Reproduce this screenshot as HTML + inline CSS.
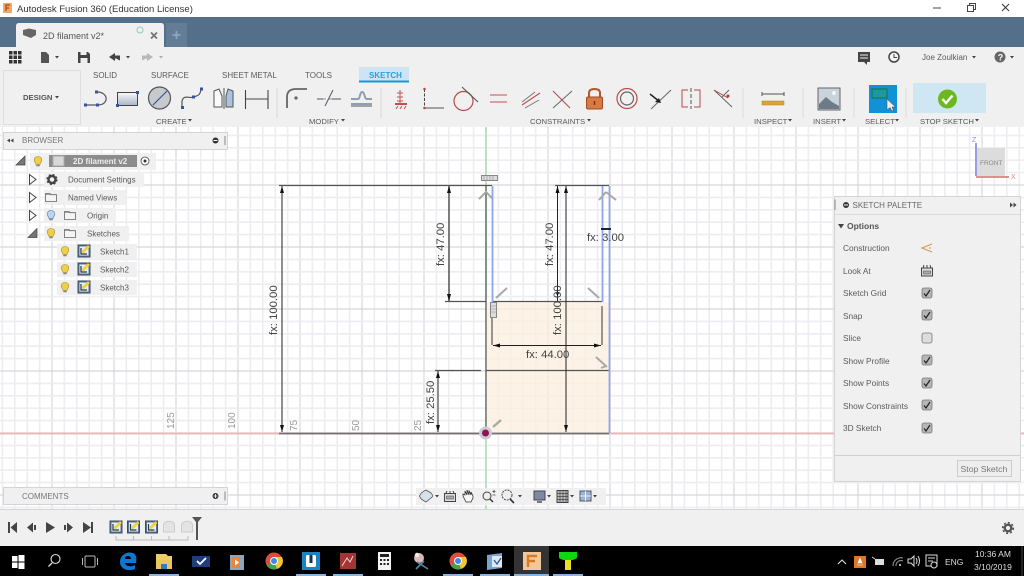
<!DOCTYPE html>
<html><head><meta charset="utf-8"><style>
html,body{margin:0;padding:0;width:1024px;height:576px;overflow:hidden;background:#fff}
svg{display:block;font-family:"Liberation Sans",sans-serif;filter:blur(.3px)}
text{fill:#5a5a5a;font-size:8.5px}
</style></head><body>
<svg width="1024" height="576" viewBox="0 0 1024 576" xmlns="http://www.w3.org/2000/svg">
<defs>
<g id="gv"><path d="M12.4 127V510M24.8 127V510M37.2 127V510M49.6 127V510" stroke="#edeef1" stroke-width="1.600" fill="none"/><path d="M0 127V510" stroke="#d6d8dc" stroke-width="1.200"/></g>
<g id="gh"><path d="M0 12.4H1024M0 24.8H1024M0 37.2H1024M0 49.6H1024" stroke="#edeef1" stroke-width="1.600" fill="none"/><path d="M0 0H1024" stroke="#d6d8dc" stroke-width="1.200"/></g>
<g id="bulb"><path d="M-2.500 2C-5 -1-3.500-4.500 0-4.500S5-1 2.500 2L2 3.500H-2Z" fill="#f1cf45" stroke="#a08f3d" stroke-width=".6"/><rect x="-1.700" y="3.500" width="3.400" height="1.800" fill="#888"/></g>
<g id="folder"><path d="M-5.500-4H-1L0-2.800H5.500V4H-5.500Z" fill="#f4f4f4" stroke="#666" stroke-width=".8"/><path d="M-5.500-2.800H0" stroke="#666" stroke-width=".6"/></g>
<g id="sk"><rect x="-6" y="-6" width="12" height="12" fill="#5b7492" stroke="#3d4c60"/><rect x="-4.500" y="-4.500" width="9" height="9" fill="#e8eef5"/><path d="M-3-3V3H3" stroke="#26364a" stroke-width="1.200" fill="none"/><path d="M-1.500 1.500L5-5" stroke="#f0d23a" stroke-width="2.800"/></g>
<g id="cb"><rect x="-5" y="-5" width="10" height="10" rx="2" fill="#b6b6b6" stroke="#777" stroke-width=".8"/><path d="M-3 .5L-1 3L3-3" stroke="#222" stroke-width="1.200" fill="none"/></g>
<g id="rowtri"><path d="M-3.500-5L3 0L-3.500 5Z" fill="#fff" stroke="#444" stroke-width="1"/></g>
<g id="opentri"><path d="M4-5V4H-5Z" fill="#777" stroke="#444" stroke-width=".7"/></g>
<g id="dn"><path d="M-2-1H2L0 1.500Z" fill="#444"/></g>
<g id="chrome"><circle r="8.500" fill="#dd4c3c"/><path d="M0 0L-7.400 4.200A8.500 8.500 0 0 0 3 8Z" fill="#46a14e"/><path d="M0-4H8A8.500 8.500 0 0 1 3 8L0 0Z" fill="#f3c530"/><circle r="4" fill="#fff"/><circle r="3" fill="#4585ee"/></g>
<linearGradient id="bg1" x1="0" y1="0" x2="0" y2="1"><stop offset="0" stop-color="#fafafa"/><stop offset="1" stop-color="#a8b4c8"/></linearGradient>
</defs>

<!-- title bar -->
<rect width="1024" height="17" fill="#fff"/>
<rect x="3" y="3" width="9" height="10" fill="#f1a868"/><path d="M6 11V5H10M6 8H9" stroke="#b8581a" stroke-width="1.500" fill="none"/>
<text x="17" y="12" style="font-size:9.500px;fill:#333">Autodesk Fusion 360 (Education License)</text>
<path d="M933 8H941" stroke="#444"/><path d="M967.500 5.500H973.500V11.500H967.500ZM969.500 5.500V3.500H975.500V9.500H973.500" fill="none" stroke="#444"/><path d="M1002 4L1009 11M1009 4L1002 11" stroke="#333"/>

<!-- tab band -->
<rect y="17" width="1024" height="30" fill="#546f8a"/>
<path d="M16 47V26Q16 23 19 23H161Q164 23 164 26V47Z" fill="#f0f0f0"/>
<rect x="166" y="23" width="21" height="24" fill="#637d96"/>
<path d="M176.500 31V39M172.500 35H180.500" stroke="#8fa4b8" stroke-width="1.800"/>
<path d="M23 30L29 28.500L36 30V35L31 38L23 35Z" fill="#666"/>
<text x="43" y="39" style="font-size:9px;fill:#555">2D filament v2*</text>
<circle cx="140" cy="30" r="3" fill="none" stroke="#8fc9c9"/>
<path d="M151 32.500L157 38.500M157 32.500L151 38.500" stroke="#777" stroke-width="1.800"/>

<!-- canvas -->
<rect y="127" width="1024" height="383" fill="#fff"/>
<use href="#gv" x="-10"/><use href="#gv" x="52"/><use href="#gv" x="114"/><use href="#gv" x="176"/><use href="#gv" x="238"/><use href="#gv" x="300"/><use href="#gv" x="362"/><use href="#gv" x="424"/><use href="#gv" x="486"/><use href="#gv" x="548"/><use href="#gv" x="610"/><use href="#gv" x="672"/><use href="#gv" x="734"/><use href="#gv" x="796"/><use href="#gv" x="858"/><use href="#gv" x="920"/><use href="#gv" x="982"/>
<path d="M0 135.400H1024M0 147.800H1024M0 160.200H1024M0 172.600H1024" stroke="#edeef1" stroke-width="1.600" fill="none"/>
<use href="#gh" y="185"/><use href="#gh" y="247"/><use href="#gh" y="309"/><use href="#gh" y="371"/><use href="#gh" y="433"/>
<path d="M0 495H1024" stroke="#d6d8dc" stroke-width="1.200"/><path d="M0 507.400H1024" stroke="#edeef1" stroke-width="1.600"/>
<path d="M0 433.500H1024" stroke="#e9b8b8" stroke-width="2"/><path d="M486 127V510" stroke="#a6d8a6" stroke-width="1.400"/>

<!-- toolbar -->
<rect y="47" width="1024" height="80" fill="#f0f0f0"/>
<g fill="#333"><rect x="9" y="51" width="3.500" height="3.500"/><rect x="13.500" y="51" width="3.500" height="3.500"/><rect x="18" y="51" width="3.500" height="3.500"/><rect x="9" y="55.500" width="3.500" height="3.500"/><rect x="13.500" y="55.500" width="3.500" height="3.500"/><rect x="18" y="55.500" width="3.500" height="3.500"/><rect x="9" y="60" width="3.500" height="3.500"/><rect x="13.500" y="60" width="3.500" height="3.500"/><rect x="18" y="60" width="3.500" height="3.500"/></g>
<path d="M41 52H46L49 55V63H41Z" fill="#555"/><use href="#dn" x="57" y="57"/>
<path d="M78 52H88L90 54V63H78Z" fill="#444"/><rect x="80.500" y="52" width="6" height="3" fill="#eee"/><rect x="80.500" y="58" width="7" height="5" fill="#eee"/>
<path d="M109 57L115 53V55.500H120V60.500L116 58.500H115V61Z" fill="#444"/><use href="#dn" x="128" y="57"/>
<path d="M153 57L147 53V55.500H142V60.500L146 58.500H147V61Z" fill="#b8b8b8"/><use href="#dn" x="161" y="57" opacity=".4"/>
<path d="M858 52H870V62H867V65L864 62H858Z" fill="#444"/><path d="M860 55H868M860 58H868" stroke="#eee"/>
<circle cx="894" cy="57" r="5" fill="#f5f5f5" stroke="#444" stroke-width="1.500"/><path d="M894 54V57.500H897" stroke="#444" fill="none"/>
<text x="922" y="60" style="font-size:8px">Joe Zoulkian</text><use href="#dn" x="974" y="57"/>
<circle cx="1000" cy="57" r="5.500" fill="#666"/><text x="997.700" y="60.500" style="font-size:9px;font-weight:bold;fill:#fff">?</text><use href="#dn" x="1012" y="57"/>

<rect x="3.500" y="70.500" width="77" height="54" fill="#f0f0f0" stroke="#dedede"/>
<text x="23" y="100" style="font-size:7.700px;font-weight:bold;fill:#555">DESIGN</text><use href="#dn" x="57" y="97"/>
<text x="93" y="78" style="font-size:8px">SOLID</text><text x="151" y="78" style="font-size:8px">SURFACE</text><text x="222" y="78" style="font-size:8px">SHEET METAL</text><text x="305" y="78" style="font-size:8px">TOOLS</text>
<rect x="359" y="67" width="50" height="15" fill="#cfe4f2"/><rect x="359" y="80.500" width="50" height="2" fill="#1d96d2"/>
<text x="369" y="78" style="font-size:8px;font-weight:bold;fill:#2a9ed8">SKETCH</text>

<!-- create icons -->
<path d="M85 105H98C109 105 109 92 97 92" fill="none" stroke="#555" stroke-width="1.200"/><g fill="#35569a"><rect x="84" y="103.500" width="3" height="3"/><rect x="96" y="103.500" width="3" height="3"/><rect x="95" y="90.500" width="3" height="3"/></g>
<rect x="117.500" y="92.500" width="20" height="13" fill="url(#bg1)" stroke="#444"/><rect x="116" y="104" width="3" height="3" fill="#35569a"/><rect x="136" y="91" width="3" height="3" fill="#35569a"/>
<circle cx="159.500" cy="98" r="11" fill="#c6c9ce" stroke="#555" stroke-width="1.200"/><path d="M153 105L167 91" stroke="#35569a" stroke-width="1.200"/>
<path d="M182 107V101C184 94 190 99 194 97S200 96 201 89" fill="none" stroke="#555" stroke-width="1.200"/><g fill="#35569a"><rect x="181" y="106" width="3" height="3"/><rect x="192" y="95.500" width="3" height="3"/><rect x="200" y="87.500" width="3" height="3"/></g>
<path d="M214 107V91L219 89L222 96V107Z" fill="#fafafa" stroke="#555"/><path d="M233 107V91L228 89L226 96V107Z" fill="#a8c4e0" stroke="#555"/><path d="M224 88V109" stroke="#555"/>
<path d="M245.500 90V109M268 90V109M246 99H268" fill="none" stroke="#444" stroke-width="1.100"/>
<path d="M277 88V118" stroke="#d8d8d8"/>
<path d="M287 108V97Q287 89 296 89H307" fill="none" stroke="#666" stroke-width="1.800"/><path d="M296 96V100M294 98H298" stroke="#444"/>
<path d="M317 99H323M332 99H341M325 106L333 90" stroke="#555"/><path d="M317 99H341" stroke="#35569a" stroke-dasharray="3 3" opacity=".6"/>
<path d="M351 104H372M351 99H358C360 99 360 92 362 92C365 92 364 99 367 99H372" fill="none" stroke="#8d9fb5" stroke-width="2"/><path d="M351 106H372" stroke="#555"/>
<path d="M381 88V118" stroke="#d8d8d8"/>

<!-- constraints -->
<path d="M400 90V104M397 93H403M397 97H403M397 101H403" stroke="#c44e4e"/><rect x="395" y="103" width="12" height="2" fill="#c44e4e"/><path d="M396 109L398 106M400 109L402 106M404 109L406 106" stroke="#c44e4e"/>
<path d="M424.500 89V108" stroke="#444" stroke-dasharray="3 1.500"/><path d="M425 108H444" stroke="#555"/><circle cx="424.500" cy="89" r="1.300" fill="#b94a4a"/><circle cx="424.500" cy="108" r="1.300" fill="#b94a4a"/>
<circle cx="463.500" cy="101" r="9.500" fill="none" stroke="#b94a4a" stroke-width="1.200"/><path d="M462 87L478 102" stroke="#555" stroke-width="1.100"/>
<path d="M490 95H507M490 102H507" stroke="#c44e4e" stroke-width="1.100"/>
<path d="M522 105L540 93" stroke="#c44e4e" stroke-width="1.100"/><path d="M525 108L539 100M522 102L535 92" stroke="#777"/>
<path d="M553 91L570 108" stroke="#b94a4a" stroke-width="1.100"/><path d="M553 108L572 91" stroke="#666"/>
<path d="M589 98V93Q589 89 594.500 89T600 93V98" fill="none" stroke="#b2562c" stroke-width="2"/><rect x="586.500" y="97" width="16" height="12" rx="1.500" fill="#d87a44" stroke="#a04c20"/><path d="M594.500 101V105" stroke="#7a3410" stroke-width="1.500"/>
<circle cx="627" cy="98.500" r="10" fill="none" stroke="#b94a4a" stroke-width="1.200"/><circle cx="627" cy="98.500" r="6.500" fill="none" stroke="#666" stroke-width="1.200"/>
<path d="M651 109L671 90" stroke="#666"/><path d="M650 94L660 102" stroke="#222" stroke-width="1.500"/><path d="M661 103L655 102L659 98Z" fill="#222"/>
<path d="M688 90H682V107H688M694 90H700V107H694" fill="none" stroke="#b94a4a" stroke-width="1"/><path d="M691 88V109" stroke="#555" stroke-dasharray="4 2"/>
<path d="M714 90L732 107M729 90L722 97" stroke="#666"/><path d="M714 90L728 98" stroke="#b94a4a"/><circle cx="728" cy="96" r="1.500" fill="#c33"/>
<path d="M743 88V118M803 88V118M854 88V118M906 88V118" stroke="#dcdcdc"/>

<!-- inspect etc -->
<rect x="762" y="101" width="22" height="4" fill="#d8a53a" stroke="#b38420" stroke-width=".5"/><path d="M762 94H784M762 92V96M784 92V96" stroke="#555" fill="none"/>
<rect x="818" y="88" width="22" height="22" fill="#c9d3dc" stroke="#666"/><path d="M819 109V104L826 97L832 102L839 106V109Z" fill="#6d7a87"/><circle cx="834" cy="93" r="2" fill="#f5f5f5"/>
<rect x="869" y="85" width="28" height="28" fill="#1191d6"/><rect x="872" y="89" width="15" height="9" fill="#1c98a0" stroke="#1c7048"/><path d="M887 99V110L890 107.500L892 111L893.500 110.500L892 107H895.500Z" fill="#eee" stroke="#444" stroke-width=".5"/>
<rect x="913" y="83" width="73" height="30" fill="#cfe6f3"/>
<circle cx="947.500" cy="99" r="9.500" fill="#6db820"/><path d="M942.500 99L946 103L952.500 95.500" stroke="#fff" stroke-width="2.400" fill="none"/>
<text x="156" y="124" style="font-size:7.700px">CREATE</text><use href="#dn" x="190" y="120"/>
<text x="309" y="124" style="font-size:7.700px">MODIFY</text><use href="#dn" x="343" y="120"/>
<text x="530" y="124" style="font-size:7.700px">CONSTRAINTS</text><use href="#dn" x="589" y="120"/>
<text x="754" y="124" style="font-size:7.700px">INSPECT</text><use href="#dn" x="790" y="120"/>
<text x="813" y="124" style="font-size:7.700px">INSERT</text><use href="#dn" x="844" y="120"/>
<text x="865" y="124" style="font-size:7.700px">SELECT</text><use href="#dn" x="897" y="120"/>
<text x="920" y="124" style="font-size:7.700px">STOP SKETCH</text><use href="#dn" x="977" y="120"/>

<!-- profile -->
<rect x="486" y="302" width="123" height="131" fill="#fbeedd" fill-opacity=".75"/>
<g fill="none" stroke="#555" stroke-width="1.200">
<path d="M486 185V433"/>
<path d="M279 433.500H609" stroke-width="1.800" stroke="#707070"/>
<path d="M279 185.500H492M555 185.500H609"/>
<path d="M445 301.500H486M492 301.500H602"/>
<path d="M435 370.500H481M486 370.500H609"/>
<path d="M602 306V345M492 306V345"/>
</g>
<path d="M492.500 186V302M602.500 186V302M609.500 186V433" stroke="#8fa6e6" stroke-width="1.800" fill="none"/>

<g stroke="#222" fill="none" stroke-width="1">
<path d="M282 186V432M449 186V301M438 371V432M557.500 186V301M566 186V432M493 345.500H601"/>
</g>
<path d="M449 186V301" stroke="#555" stroke-width="1.500"/>
<g fill="#111">
<path d="M282 186L280 193H284ZM282 432L280 425H284Z"/>
<path d="M449 186L447 193H451ZM449 301L447 294H451Z"/>
<path d="M438 371L436 378H440ZM438 432L436 425H440Z"/>
<path d="M557.500 186L555.500 193H559.500ZM557.500 296L555.500 292H559.500Z"/>
<path d="M566 186L564 193H568ZM566 432L564 425H568Z"/>
<path d="M493 345.500L500 343.500V347.500ZM601 345.500L594 343.500V347.500Z"/>
</g>
<path d="M601 229H611" stroke="#223" stroke-width="2"/>

<!-- dim text -->
<text transform="translate(277 335) rotate(-90)" style="font-size:11.300px;fill:#444">fx: 100.00</text>
<text transform="translate(444 266) rotate(-90)" style="font-size:11.300px;fill:#444">fx: 47.00</text>
<text transform="translate(553 266) rotate(-90)" style="font-size:11.300px;fill:#444">fx: 47.00</text>
<text transform="translate(561 335) rotate(-90)" style="font-size:11.300px;fill:#444">fx: 100.00</text>
<text transform="translate(434 424) rotate(-90)" style="font-size:11.300px;fill:#444">fx: 25.50</text>
<text x="587" y="241" style="font-size:11.300px;fill:#444">fx: 3.00</text>
<text x="526" y="358" style="font-size:11.300px;fill:#444">fx: 44.00</text>
<text transform="translate(174 429) rotate(-90)" style="font-size:10px;fill:#999">125</text>
<text transform="translate(235 429) rotate(-90)" style="font-size:10px;fill:#999">100</text>
<text transform="translate(297 431) rotate(-90)" style="font-size:10px;fill:#999">75</text>
<text transform="translate(359 431) rotate(-90)" style="font-size:10px;fill:#999">50</text>
<text transform="translate(421 431) rotate(-90)" style="font-size:10px;fill:#999">25</text>

<!-- constraint marks -->
<path d="M479 199L486 192L493 199" fill="none" stroke="#a8a8a8" stroke-width="2"/>
<path d="M606 192L599 200M606 192L616 200" stroke="#a8a8a8" stroke-width="2" fill="none"/>
<path d="M496 298L507 288" stroke="#a8a8a8" stroke-width="2" fill="none"/>
<path d="M588 288L599 298" stroke="#a8a8a8" stroke-width="2" fill="none"/>
<path d="M596 357L607 367M606 366L601 368" stroke="#a8a8a8" stroke-width="2" fill="none"/>
<path d="M493 427L501 420" stroke="#a8a8a8" stroke-width="2.400"/>
<rect x="481.500" y="175.500" width="16" height="5" fill="#ddd" stroke="#888"/><path d="M484 176V180M487 176V180M490 176V180M493 176V180" stroke="#888" stroke-width=".6"/>
<rect x="490.500" y="302.500" width="6" height="15" fill="#ddd" stroke="#888"/><path d="M491 306H496M491 309H496M491 312H496" stroke="#888" stroke-width=".6"/>
<circle cx="485.500" cy="433" r="6.500" fill="#ccc"/><circle cx="485.500" cy="433" r="3.500" fill="#8e1458"/>

<!-- view cube -->
<path d="M976 143V176" stroke="#7b7bd6" stroke-width="1.500"/><path d="M976 177H1009" stroke="#d86a6a" stroke-width="1.500"/>
<rect x="977" y="148" width="28" height="28" fill="#dcdcdc"/>
<text x="980" y="165" style="font-size:6.500px;fill:#888">FRONT</text>
<text x="972" y="142" style="font-size:7px;fill:#8f8fd6">Z</text><text x="1011" y="179" style="font-size:7px;fill:#d88">X</text>

<!-- browser -->
<rect x="3.500" y="132.500" width="224" height="17" fill="#f0f0f0" stroke="#d4d4d4"/>
<path d="M7 140.500L10 138.500V142.500ZM10.500 140.500L13.500 138.500V142.500Z" fill="#444"/>
<text x="22" y="143" style="font-size:8px;fill:#777">BROWSER</text>
<circle cx="215.500" cy="140.500" r="3" fill="#333"/><path d="M213.500 140.500H217.500" stroke="#fff"/><path d="M225 136V145" stroke="#888"/>

<rect x="30" y="153" width="126" height="17" fill="#f0f0f0"/>
<use href="#opentri" x="21" y="161"/><use href="#bulb" x="38" y="161"/>
<rect x="49" y="155" width="88" height="12" fill="#8c8c8c"/><rect x="53" y="156" width="11" height="10" fill="#d8d8d8" stroke="#aaa"/>
<text x="73" y="164" style="font-size:8px;font-weight:bold;fill:#eee">2D filament v2</text>
<circle cx="145" cy="161" r="4" fill="#fff" stroke="#444" stroke-width=".8"/><circle cx="145" cy="161" r="1.500" fill="#333"/>

<rect x="44" y="172" width="100" height="15" fill="#f0f0f0"/>
<use href="#rowtri" x="33" y="179.500"/>
<circle cx="52" cy="179.500" r="3.500" fill="none" stroke="#444" stroke-width="2.400"/><circle cx="52" cy="179.500" r="5" fill="none" stroke="#444" stroke-width="1.200" stroke-dasharray="2 2"/>
<text x="68" y="182.500" style="font-size:8px">Document Settings</text>
<rect x="44" y="190" width="82" height="15" fill="#f0f0f0"/>
<use href="#rowtri" x="33" y="197.500"/><use href="#folder" x="51" y="197.500"/>
<text x="68" y="200.500" style="font-size:8px">Named Views</text>
<rect x="44" y="208" width="72" height="15" fill="#f0f0f0"/>
<use href="#rowtri" x="33" y="215.500"/>
<g transform="translate(51 215)"><path d="M-2.500 2C-5 -1-3.500-4.500 0-4.500S5-1 2.500 2L2 3.500H-2Z" fill="#bcd4ee" stroke="#6a8cb0" stroke-width=".7"/><rect x="-1.700" y="3.500" width="3.400" height="1.800" fill="#888"/></g>
<use href="#folder" x="70" y="215.500"/>
<text x="87" y="218.500" style="font-size:8px">Origin</text>
<rect x="44" y="226" width="85" height="15" fill="#f0f0f0"/>
<use href="#opentri" x="33" y="233.500"/><use href="#bulb" x="51" y="233"/><use href="#folder" x="70" y="233.500"/>
<text x="87" y="236.500" style="font-size:8px">Sketches</text>
<rect x="57" y="244" width="80" height="15" fill="#f0f0f0"/><rect x="57" y="262" width="80" height="15" fill="#f0f0f0"/><rect x="57" y="280" width="80" height="15" fill="#f0f0f0"/>
<use href="#bulb" x="65" y="251"/><use href="#sk" x="84" y="251"/><text x="100" y="254.500" style="font-size:8px">Sketch1</text>
<use href="#bulb" x="65" y="269"/><use href="#sk" x="84" y="269"/><text x="100" y="272.500" style="font-size:8px">Sketch2</text>
<use href="#bulb" x="65" y="287"/><use href="#sk" x="84" y="287"/><text x="100" y="290.500" style="font-size:8px">Sketch3</text>

<!-- comments -->
<rect x="3.500" y="487.500" width="224" height="17" fill="#f0f0f0" stroke="#d4d4d4"/>
<text x="22" y="499" style="font-size:8px;fill:#777">COMMENTS</text>
<circle cx="215.500" cy="496" r="3" fill="#333"/><path d="M213.500 496H217.500M215.500 494V498" stroke="#fff" stroke-width=".8"/><path d="M225 491.500V500.500" stroke="#888"/>

<!-- nav bar -->
<rect x="416" y="488" width="190" height="17" fill="#f0f0f0"/>
<path d="M426 490L431 493C433 495 433 497 431 498L426 502C422 500 420 498 419.500 496C420 494 422 492 426 490Z" fill="#d8e2ec" stroke="#555" stroke-width=".8"/><use href="#dn" x="437" y="496"/>
<rect x="444.500" y="493.500" width="11" height="8" fill="#ddd" stroke="#444"/><rect x="446.500" y="496" width="7" height="3" fill="#aaa" stroke="#444" stroke-width=".5"/><path d="M446 493L447 491M450 493V491M454 493L453 491" stroke="#444"/>
<path d="M466 502L463 496V494L465 495V491L467 495V490L469 495V490.500L471 495V492L473 496V498L471 502Z" fill="#f8f8f8" stroke="#333" stroke-width=".8"/>
<circle cx="487" cy="496" r="4" fill="#eee" stroke="#444"/><path d="M490 499L493 502" stroke="#333" stroke-width="1.400"/><path d="M492.500 491.500H495.500M494 490V493M492.500 495H495.500" stroke="#444" stroke-width=".8"/>
<circle cx="507" cy="495" r="5" fill="#eee" stroke="#444" stroke-dasharray="2 1"/><path d="M510 499L514 503" stroke="#333" stroke-width="1.600"/><use href="#dn" x="520" y="496"/>
<rect x="534" y="491" width="11" height="9" fill="#7c8ba0" stroke="#445"/><path d="M537 502H542" stroke="#445" stroke-width="1.400"/><use href="#dn" x="549" y="496"/>
<rect x="557" y="490.500" width="11" height="12" fill="#bbb" stroke="#444"/><path d="M557 493.500H568M557 496.500H568M557 499.500H568M560 490.500V502.500M563 490.500V502.500M566 490.500V502.500" stroke="#444" stroke-width=".7"/><use href="#dn" x="572" y="496"/>
<rect x="580" y="491" width="11" height="10" fill="#9cb4d4" stroke="#556"/><path d="M585.500 491V501M580 496H591" stroke="#fff" stroke-width=".8"/><use href="#dn" x="595" y="496"/>

<!-- sketch palette -->
<rect x="834.500" y="196.500" width="186" height="285" fill="#f0f0f0" stroke="#d4d4d4"/>
<path d="M835 199.500V210" stroke="#888"/><circle cx="846" cy="205" r="3" fill="#333"/><path d="M844 205H848" stroke="#fff"/>
<text x="852.500" y="208" style="font-size:8px;fill:#666">SKETCH PALETTE</text>
<path d="M1010 202.500L1013 205L1010 207.500ZM1013.500 202.500L1016.500 205L1013.500 207.500Z" fill="#444"/>
<path d="M835 214.500H1020" stroke="#dcdcdc"/>
<path d="M838 224H844L841 228.500Z" fill="#444"/>
<text x="847" y="229" style="font-size:8.500px;font-weight:bold;fill:#555">Options</text>
<text x="843" y="251" style="font-size:8.300px">Construction</text>
<text x="843" y="274" style="font-size:8.300px">Look At</text>
<text x="843" y="296" style="font-size:8.300px">Sketch Grid</text>
<text x="843" y="319" style="font-size:8.300px">Snap</text>
<text x="843" y="341" style="font-size:8.300px">Slice</text>
<text x="843" y="364" style="font-size:8.300px">Show Profile</text>
<text x="843" y="386" style="font-size:8.300px">Show Points</text>
<text x="843" y="409" style="font-size:8.300px">Show Constraints</text>
<text x="843" y="431" style="font-size:8.300px">3D Sketch</text>
<path d="M932 244L922 248L932 252M930 247V249" fill="none" stroke="#d89858" stroke-width="1.200"/>
<rect x="921.500" y="268" width="11" height="8" fill="#ddd" stroke="#444"/><rect x="923.500" y="271" width="7" height="3" fill="#aaa" stroke="#444" stroke-width=".5"/><path d="M923 268L924 265M927 268V265M931 268L930 265" stroke="#444"/>
<use href="#cb" x="927" y="293"/><use href="#cb" x="927" y="315"/>
<rect x="922" y="333" width="10" height="10" rx="2" fill="#ddd" stroke="#777" stroke-width=".8"/>
<use href="#cb" x="927" y="360"/><use href="#cb" x="927" y="383"/><use href="#cb" x="927" y="405"/><use href="#cb" x="927" y="428"/>
<path d="M835 455.500H1020" stroke="#d0d0d0"/>
<rect x="957.500" y="460.500" width="54" height="16" fill="#eee" stroke="#ccc"/>
<text x="960.500" y="472" style="font-size:8.700px;fill:#777">Stop Sketch</text>

<!-- timeline -->
<rect y="509" width="1024" height="37" fill="#f0f0f0"/><path d="M0 509.500H1024" stroke="#d4d4d4"/>
<g fill="#444">
<path d="M8 522H10V533H8ZM17 522V533L10.500 527.500Z"/>
<path d="M27 527.500L33 522.500V532.500ZM34 525H36V530H34Z"/>
<path d="M46 522V533L55 527.500Z"/>
<path d="M64 525H66V530H64ZM67 522.500L73 527.500L67 532.500Z"/>
<path d="M83 522L91 527.500L83 533ZM91 522H93V533H91Z"/>
</g>
<use href="#sk" x="116" y="527"/><use href="#sk" x="133.500" y="527"/><use href="#sk" x="151.500" y="527"/>
<g fill="#e4e4e4" stroke="#ccc"><path d="M163.500 525C164 520 174 520 174.500 525V532H163.500Z"/><path d="M181.500 525C182 520 192 520 192.500 525V532H181.500Z"/></g>
<path d="M116 536V540H188V536M133.500 536V540M151.500 536V540M169 536V540" fill="none" stroke="#bbb"/>
<path d="M192 517H202L198 522V540H196V522Z" fill="#555"/>
<circle cx="1008" cy="528" r="3.300" fill="none" stroke="#555" stroke-width="2.400"/><circle cx="1008" cy="528" r="5.300" fill="none" stroke="#555" stroke-width="1.600" stroke-dasharray="2 2.100"/>

<!-- taskbar -->
<rect y="546" width="1024" height="30" fill="#000"/>
<rect x="514" y="546" width="35" height="30" fill="#333"/>
<g fill="none" stroke="#8ab4df" stroke-width="2"><path d="M149 575H179M296 575H326M333 575H363M443 575H473M480 575H510M514 575H549M553 575H583"/></g>
<g fill="#fff"><rect x="12" y="556" width="5.500" height="5.500"/><rect x="18.500" y="555" width="6" height="6.500"/><rect x="12" y="562.500" width="5.500" height="5.500"/><rect x="18.500" y="562.500" width="6" height="6.500"/></g>
<circle cx="55.500" cy="559" r="4.500" fill="none" stroke="#ddd" stroke-width="1.100"/><path d="M52 563L48.500 566.500" stroke="#ddd" stroke-width="1.300"/>
<rect x="85" y="556" width="10" height="11" rx="1" fill="none" stroke="#bbb"/><path d="M82.500 558V565M97.500 558V565" stroke="#bbb"/>
<path d="M136 563H125C126 567 132 567 135 565V569C128 572 120 569 120 562C120 555 127 551 133 553C136 554 137 558 136 563ZM131 559C131 555 125 555 125 559Z" fill="#1077d0"/>
<path d="M156 554H166L168 556H172V569H156Z" fill="#f3cc6a"/><rect x="156" y="560" width="16" height="9" fill="#e8c85c"/><rect x="161" y="564" width="6" height="5" fill="#2a7fc8"/>
<rect x="192" y="556" width="18" height="11" fill="#1f3d78"/><path d="M197 561L200 564L206 558" stroke="#fff" stroke-width="1.800" fill="none"/>
<rect x="230" y="555" width="14" height="15" fill="#8ba6c0"/><path d="M232 557H240V568H232Z" fill="#e8873c"/><path d="M235 559.500L239 562.500L235 565.500Z" fill="#fff"/>
<use href="#chrome" x="274" y="561"/>
<rect x="302" y="552" width="18" height="18" fill="#1a83c4"/><rect x="306" y="555" width="10" height="12" rx="1.500" fill="#fff"/><rect x="309.500" y="555" width="3" height="8" fill="#17324e"/>
<rect x="340" y="553" width="16" height="16" fill="#a53434"/><path d="M342 566L347 558L350 562L353 556" stroke="#f6d0d0" fill="none"/>
<rect x="378" y="552" width="13" height="18" fill="#f4f4f4"/><rect x="380" y="554" width="9" height="3" fill="#222"/><g fill="#222"><rect x="380" y="559" width="2" height="2"/><rect x="383.500" y="559" width="2" height="2"/><rect x="387" y="559" width="2" height="2"/><rect x="380" y="563" width="2" height="2"/><rect x="383.500" y="563" width="2" height="2"/><rect x="387" y="563" width="2" height="2"/></g>
<circle cx="419" cy="558" r="5" fill="#d8b8b8"/><path d="M417 562L428 569M424 561L416 569" stroke="#4a8aa8" stroke-width="1.600"/><circle cx="417" cy="555" r="2.200" fill="#eee"/>
<use href="#chrome" x="458" y="561"/>
<path d="M487 555L502 553V568L487 570Z" fill="#7aa4d0"/><rect x="492" y="556" width="10" height="11" fill="#dfe8f2"/><path d="M494 560L497 564L501 558" stroke="#2a5a9a" fill="none" stroke-width="1.300"/>
<rect x="523" y="552" width="18" height="18" fill="#f3c79c"/><path d="M528 567V556H537M528 561H535" stroke="#d87a24" stroke-width="2.400" fill="none"/>
<path d="M559 552H577V558L573 560H563L559 558Z" fill="#0fd80f"/><rect x="565" y="560" width="6" height="10" fill="#e8e020"/>

<!-- tray -->
<path d="M838 564L842 560L846 564" fill="none" stroke="#ddd" stroke-width="1.100"/>
<rect x="854" y="556" width="12" height="12" fill="#e0762a"/><path d="M857 565H863M860 558L862 563H858Z" fill="#fff" stroke="#fff" stroke-width=".6"/>
<rect x="875" y="559" width="9" height="6" fill="#ddd"/><path d="M872 557L875 559" stroke="#ddd"/>
<path d="M893 566A8 8 0 0 1 903 558M896 566A5 5 0 0 1 903 561" fill="none" stroke="#999"/><circle cx="900" cy="565" r="1" fill="#ddd"/>
<path d="M908 559H911L914 556V566L911 563H908Z" fill="none" stroke="#ddd"/><path d="M916 558Q918 561 916 564M918 556Q921 561 918 566" fill="none" stroke="#ddd"/>
<path d="M926 555H937V566H926Z" fill="none" stroke="#ddd"/><path d="M928 558H935M928 561H933" stroke="#ddd"/><circle cx="934" cy="565" r="3" fill="#000" stroke="#ddd"/>
<text x="945" y="565" style="font-size:8.500px;fill:#ddd">ENG</text>
<text x="975" y="557" style="font-size:8.500px;fill:#ddd">10:36 AM</text>
<text x="974" y="570" style="font-size:8.500px;fill:#ddd">3/10/2019</text>
<path d="M1022 546V576" stroke="#444"/>
</svg>
</body></html>
